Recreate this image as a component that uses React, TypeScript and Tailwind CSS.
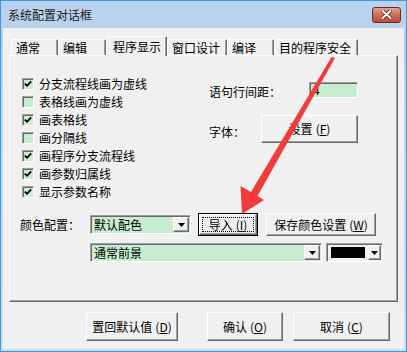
import React from 'react';

const raised =
  'border border-t-white border-l-white border-r-[#696969] border-b-[#696969] shadow-[inset_-1px_-1px_0_#a0a0a0]';
const sunken =
  'border border-t-[#a0a0a0] border-l-[#a0a0a0] border-r-white border-b-white shadow-[inset_1px_1px_0_#696969]';

const checks: { label: string; checked: boolean }[] = [
  { label: '分支流程线画为虚线', checked: true },
  { label: '表格线画为虚线', checked: false },
  { label: '画表格线', checked: true },
  { label: '画分隔线', checked: false },
  { label: '画程序分支流程线', checked: true },
  { label: '画参数归属线', checked: true },
  { label: '显示参数名称', checked: true },
];

const tabs: { label: string; w: string; active?: boolean }[] = [
  { label: '通常', w: 'w-[47px]' },
  { label: '编辑', w: 'w-[48px]' },
  { label: '程序显示', w: 'w-[61px]', active: true },
  { label: '窗口设计', w: 'w-[60px]' },
  { label: '编译', w: 'w-[47px]' },
  { label: '目的程序安全', w: 'w-[84px]' },
];

const Key = ({ k }: { k: string }) => (
  <span className="ml-[3px] text-[12px]">
    (<span className="underline">{k}</span>)
  </span>
);

const CheckBox = ({ checked }: { checked: boolean }) => (
  <div className={`flex h-[12px] w-[12px] items-center justify-center bg-[#c8ecd0] ${sunken}`}>
    {checked && (
      <svg width="8" height="8" viewBox="0 0 8 8">
        <path d="M0.8 3.6 L3 5.8 L7.2 1.4" fill="none" stroke="#000" strokeWidth="1.8" />
      </svg>
    )}
  </div>
);

const DropBtn = () => (
  <div className={`flex h-full w-[16px] items-center justify-center bg-[#f0f0f0] ${raised}`}>
    <svg width="7" height="4" viewBox="0 0 7 4">
      <path d="M0 0 H7 L3.5 4 Z" fill="#000" />
    </svg>
  </div>
);

const Button = ({ w, h, children }: { w: string; h: string; children: React.ReactNode }) => (
  <div className={`flex ${w} ${h} items-center justify-center bg-[#f0f0f0] ${raised}`}>{children}</div>
);

export default function App() {
  return (
    <div className="relative h-[352px] w-[407px] overflow-hidden font-['Noto_Sans_CJK_SC','Noto_Sans_CJK_JP',sans-serif] text-[12px] leading-none text-black">
      <div className="flex h-full w-full flex-col border border-[#3d9ad8] bg-gradient-to-b from-[#b8d1ec] to-[#cadef2] px-[2px] pb-[2px]">
        {/* title bar */}
        <div className="flex h-[27px] items-center justify-between pl-[5px] pr-[3px]">
          <span className="text-[12px] text-[#1a1a1a]">系统配置对话框</span>
          <div className="flex h-[16px] w-[29px] items-center justify-center rounded-[3px] border border-[#6b2a24] bg-gradient-to-b from-[#e4a392] via-[#cf6a58] to-[#c24a38]">
            <svg width="11" height="9" viewBox="0 0 11 9">
              <path d="M1.5 1 L9.5 8 M9.5 1 L1.5 8" stroke="#5a2620" strokeWidth="3.6" strokeLinecap="round" />
              <path d="M1.5 1 L9.5 8 M9.5 1 L1.5 8" stroke="#fff" strokeWidth="2" strokeLinecap="round" />
            </svg>
          </div>
        </div>

        {/* client */}
        <div className="flex flex-1 flex-col bg-[#f0f0f0]">
          {/* tabs */}
          <div className="relative z-10 flex h-[27px] items-end pl-[8px]">
            {tabs.map((t) =>
              t.active ? (
                <div
                  key={t.label}
                  className={`${t.w} -mb-[1px] flex h-[20px] items-center border-l border-t border-r border-l-white border-t-white border-r-[#696969] bg-[#f0f0f0] pl-[6px] shadow-[inset_-1px_0_0_#a0a0a0]`}
                >
                  {t.label}
                </div>
              ) : (
                <div
                  key={t.label}
                  className={`${t.w} flex h-[16px] items-center border-l border-t border-r border-l-white border-t-white border-r-[#696969] pl-[4px] shadow-[inset_-1px_0_0_#a0a0a0]`}
                >
                  {t.label}
                </div>
              )
            )}
          </div>

          {/* panel */}
          <div className={`mx-[6px] flex h-[247px] flex-col ${raised}`}>
            <div className="flex pl-[12px] pt-[19px]">
              <div className="flex w-[187px] flex-col">
                {checks.map((c) => (
                  <div key={c.label} className="flex h-[18px] items-center gap-[5px]">
                    <CheckBox checked={c.checked} />
                    <span>{c.label}</span>
                  </div>
                ))}
              </div>
              <div className="flex flex-col pt-[7px]">
                <div className="flex h-[16px] items-center">
                  <span className="w-[100px] pt-[3px]">语句行间距：</span>
                  <div className={`flex h-[16px] w-[49px] items-center bg-[#c8ecd0] pl-[3px] ${sunken}`}>4</div>
                </div>
                <div className="mt-[17px] flex h-[28px] items-center">
                  <span className="w-[52px] pt-[6px]">字体：</span>
                  <Button w="w-[97px]" h="h-[28px]">
                    设置<Key k="F" />
                  </Button>
                </div>
              </div>
            </div>

            <div className="mt-[12px] flex flex-col pl-[10px]">
              <div className="flex h-[23px] items-center">
                <span className="w-[70px]">颜色配置：</span>
                <div className={`flex h-[19px] w-[101px] items-center bg-[#c8ecd0] p-[1px] ${sunken}`}>
                  <span className="flex-1 pl-[2px] text-[12px]">默认配色</span>
                  <DropBtn />
                </div>
                <div className="ml-[7px] flex h-[23px] w-[60px] border border-black">
                  <div className={`flex flex-1 items-center justify-center bg-[#f0f0f0] p-[2px] ${raised}`}>
                    <div className="flex h-full w-full items-center justify-center border border-dotted border-black">
                      导入<Key k="I" />
                    </div>
                  </div>
                </div>
                <div className="ml-[8px]">
                  <Button w="w-[110px]" h="h-[23px]">
                    保存颜色设置<Key k="W" />
                  </Button>
                </div>
              </div>
              <div className="mt-[7px] flex h-[19px] items-center pl-[70px]">
                <div className={`flex h-[19px] w-[232px] items-center bg-[#c8ecd0] p-[1px] ${sunken}`}>
                  <span className="flex-1 pl-[2px]">通常前景</span>
                  <DropBtn />
                </div>
                <div className={`ml-[4px] flex h-[19px] w-[57px] items-center bg-[#f0f0f0] p-[1px] ${sunken}`}>
                  <div className="flex flex-1 items-center px-[3px]">
                    <div className="h-[11px] w-[34px] bg-black" />
                  </div>
                  <DropBtn />
                </div>
              </div>
            </div>
          </div>

          {/* bottom buttons */}
          <div className="mt-[10px] flex h-[29px] items-center pl-[83px]">
            <Button w="w-[92px]" h="h-[29px]">
              置回默认值<Key k="D" />
            </Button>
            <div className="ml-[29px]">
              <Button w="w-[76px]" h="h-[29px]">
                确认<Key k="O" />
              </Button>
            </div>
            <div className="ml-[10px]">
              <Button w="w-[97px]" h="h-[29px]">
                取消<Key k="C" />
              </Button>
            </div>
          </div>
        </div>
      </div>

      {/* red annotation arrow */}
      <svg className="pointer-events-none absolute left-0 top-0" width="407" height="352" viewBox="0 0 407 352">
        <path d="M331.5 57 L335 58 L257.5 196 L264 200 L242 214 L240.5 186 L251 192 Z" fill="#f23c3c" />
      </svg>
    </div>
  );
}
